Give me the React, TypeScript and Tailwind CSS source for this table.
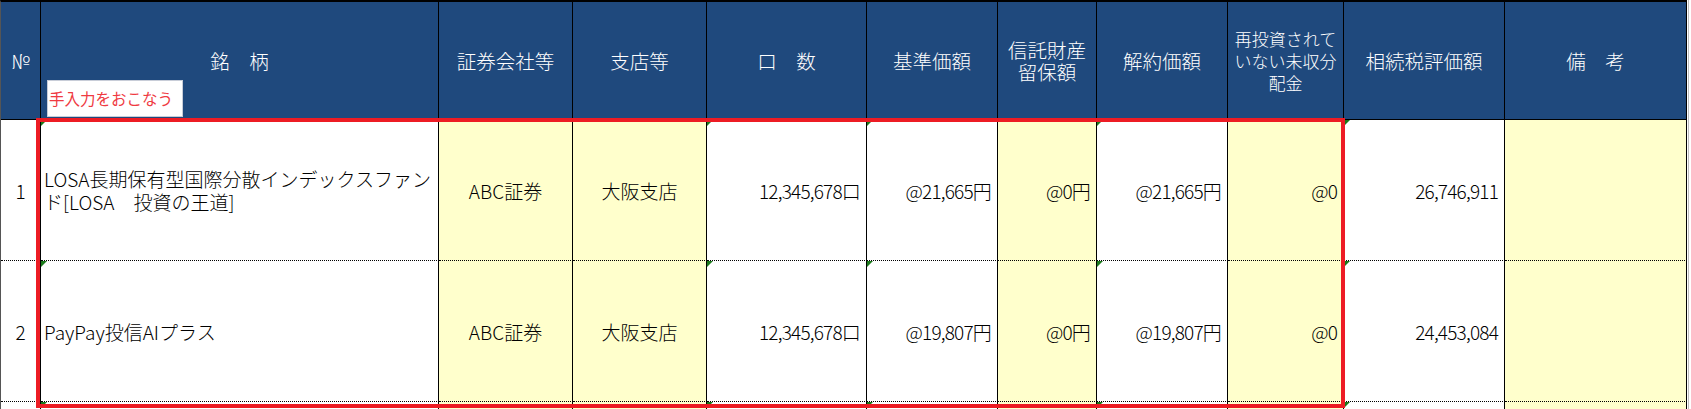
import React from "react";

type Col = {
  label: React.ReactNode;
  yellow: boolean;
  align: "center" | "left" | "right";
  mark: boolean;
  small?: boolean;
};

const cols: Col[] = [
  { label: "№", yellow: false, align: "center", mark: false },
  { label: "銘　柄", yellow: false, align: "left", mark: true },
  { label: "証券会社等", yellow: true, align: "center", mark: false },
  { label: "支店等", yellow: true, align: "center", mark: false },
  { label: "口　数", yellow: false, align: "right", mark: true },
  { label: "基準価額", yellow: false, align: "right", mark: true },
  { label: <>信託財産<br />留保額</>, yellow: true, align: "right", mark: false },
  { label: "解約価額", yellow: false, align: "right", mark: true },
  {
    label: <>再投資されて<br />いない未収分<br />配金</>,
    yellow: true,
    align: "right",
    mark: false,
    small: true,
  },
  { label: "相続税評価額", yellow: false, align: "right", mark: true },
  { label: "備　考", yellow: true, align: "center", mark: false },
];

const rows: React.ReactNode[][] = [
  [
    "1",
    <>LOSA長期保有型国際分散インデックスファン<br />ド[LOSA　投資の王道]</>,
    "ABC証券",
    "大阪支店",
    "12,345,678口",
    "@21,665円",
    "@0円",
    "@21,665円",
    "@0",
    "26,746,911",
    "",
  ],
  [
    "2",
    "PayPay投信AIプラス",
    "ABC証券",
    "大阪支店",
    "12,345,678口",
    "@19,807円",
    "@0円",
    "@19,807円",
    "@0",
    "24,453,084",
    "",
  ],
  ["", "", "", "", "", "", "", "", "", "", ""],
];

function Mark() {
  return (
    <span className="absolute left-0 top-0 h-0 w-0 border-t-[6px] border-r-[6px] border-t-[#1b7a1b] border-r-transparent" />
  );
}

function BodyCell({ col, value, tall }: { col: Col; value: React.ReactNode; tall: boolean }) {
  const justify =
    col.align === "left" ? "justify-start pl-[3px] text-left" : col.align === "right" ? "justify-end pr-[6px] text-right" : "justify-center text-center";
  return (
    <div
      className={`relative flex items-center border-r border-b border-r-black border-b-black border-dotted-b ${justify} ${
        tall ? "h-[141px]" : "h-[40px]"
      } ${col.yellow ? "bg-[#ffffcc]" : "bg-white"}`}
      style={{ borderBottomStyle: "dotted" }}
    >
      {col.mark && <Mark />}
      <span
        className={`whitespace-nowrap leading-[23px] ${
          col.align === "right" ? "tracking-[-0.8px]" : ""
        }`}
      >
        {value}
      </span>
    </div>
  );
}

export default function App() {
  return (
    <div className="relative flex h-[409px] w-[1691px] overflow-hidden bg-white font-['Noto_Sans_CJK_JP',sans-serif] text-[19px] font-light text-black">
      <div className="w-[1687px] shrink-0 border-l border-t-2 border-l-[#555555] border-t-black">
        <div className="grid grid-cols-[40px_398px_134px_134px_160px_131px_99px_131px_116px_161px_182px]">
          {cols.map((c, i) => (
            <div
              key={`h${i}`}
              className={`flex h-[118px] items-center justify-center border-r border-b border-black bg-[#1f497d] text-center text-white ${
                c.small ? "text-[17px] leading-[22px]" : "text-[19.5px] leading-[22px]"
              }`}
            >
              <span className="whitespace-nowrap">{c.label}</span>
            </div>
          ))}
          {rows.map((r, ri) =>
            r.map((v, ci) => (
              <BodyCell key={`r${ri}c${ci}`} col={cols[ci]} value={v} tall={ri < 2} />
            ))
          )}
        </div>
      </div>
      <div className="w-px shrink-0 bg-white" />
      <div className="w-px shrink-0 bg-[#bdbdbd]" />
      <div className="flex-1 bg-white" />

      {/* 手入力ラベル */}
      <div className="absolute left-[47px] top-[80px] flex h-[37px] w-[136px] items-center border border-[#c8cdd8] bg-white pl-[1px] text-[15.5px] font-normal text-[#ef3a42]">
        手入力をおこなう
      </div>

      {/* 赤枠 */}
      <div className="pointer-events-none absolute left-[36px] top-[118px] h-[290px] w-[1309px] border-4 border-[#ed1c24]" />
    </div>
  );
}
